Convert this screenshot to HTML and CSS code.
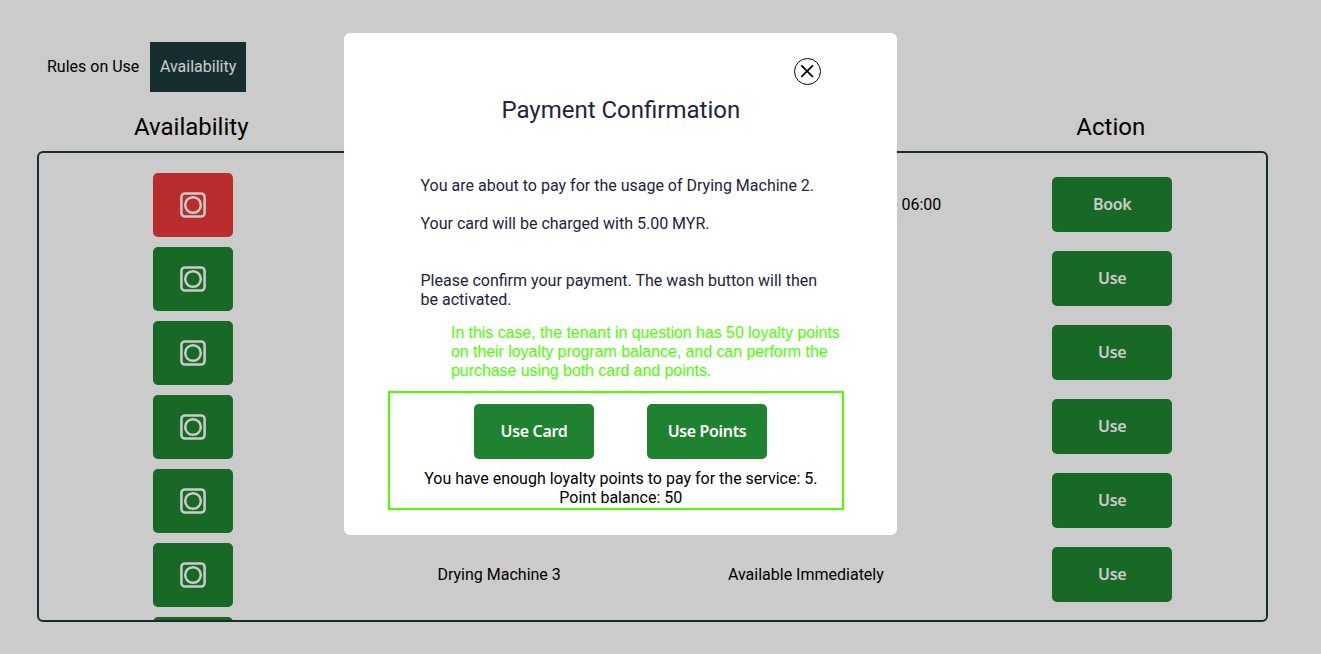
FILE: index.html
```html
<!DOCTYPE html>
<html lang="en">
<head>
<meta charset="utf-8">
<title>Payment Confirmation</title>
<link rel="stylesheet" href="styles.css">
</head>
<body>
<svg width="0" height="0" class="defs">
  <symbol id="machine" viewBox="0 0 26 26">
    <rect x="1.4" y="1.4" width="23.2" height="23.2" rx="3.6" fill="none" stroke="currentColor" stroke-width="2.5"/>
    <circle cx="13" cy="13" r="7.8" fill="none" stroke="currentColor" stroke-width="2.5"/>
  </symbol>
</svg>
<main class="page">
  <nav class="tabs">
    <a class="tab">Rules on Use</a>
    <a class="tab active">Availability</a>
  </nav>
  <div class="heads">
    <h2>Availability</h2><h2></h2><h2></h2><h2>Action</h2>
  </div>
  <section class="list">
    <div class="row"><div class="status busy"><svg><use href="#machine"/></svg></div><span></span><span class="slot">- 06:00</span><button class="btn">Book</button></div>
    <div class="row"><div class="status"><svg><use href="#machine"/></svg></div><span></span><span></span><button class="btn">Use</button></div>
    <div class="row"><div class="status"><svg><use href="#machine"/></svg></div><span></span><span></span><button class="btn">Use</button></div>
    <div class="row"><div class="status"><svg><use href="#machine"/></svg></div><span></span><span></span><button class="btn">Use</button></div>
    <div class="row"><div class="status"><svg><use href="#machine"/></svg></div><span></span><span></span><button class="btn">Use</button></div>
    <div class="row"><div class="status"><svg><use href="#machine"/></svg></div><span>Drying Machine 3</span><span>Available Immediately</span><button class="btn">Use</button></div>
    <div class="row"><div class="status"></div></div>
  </section>
</main>
<div class="overlay">
  <div class="modal">
    <svg class="close" viewBox="0 0 27 27"><circle cx="13.5" cy="13.5" r="13" fill="none" stroke="#000"/><path d="M7.3 7.3l11.6 11.6M18.9 7.3L7.3 18.9" stroke="#000" stroke-width="1.7"/></svg>
    <h1>Payment Confirmation</h1>
    <div class="copy">
      <p>You are about to pay for the usage of Drying Machine 2.</p>
      <p>Your card will be charged with 5.00 MYR.</p>
      <p class="confirm">Please confirm your payment. The wash button will then be activated.</p>
    </div>
    <div class="actions"><button class="btn">Use Card</button><button class="btn">Use Points</button></div>
    <p class="balance">You have enough loyalty points to pay for the service: 5.<br>Point balance: 50</p>
    <p class="note">In this case, the tenant in question has 50 loyalty points<br>on their loyalty program balance, and can perform the<br>purchase using both card and points.</p>
    <div class="frame"></div>
  </div>
</div>
</body>
</html>
```
FILE: styles.css
```css
* { box-sizing: border-box; }
body { margin: 0; height: 654px; overflow: hidden; background: #fefefe; color: #000; font: 16px/19px Roboto, sans-serif; }
h1, h2, p { margin: 0; font-weight: 400; }
.defs { position: absolute; }
.page { padding: 42px 53px 0 37px; }
.tabs { display: flex; height: 50px; }
.tab { padding: 0 10px; line-height: 49px; }
.tab.active { width: 96px; margin-left: .6px; background: #1c3a3b; color: #fefefe; }
.heads { display: grid; grid-template-columns: repeat(4, 1fr); padding: 0 4px 0 1px; height: 59px; }
.heads h2 { font-size: 24px; line-height: 28px; padding-top: 21px; text-align: center; }
.list { height: 471px; padding-top: 20px; border: 2px solid #1c3a3b; border-radius: 6px; overflow: hidden; }
.row { display: grid; grid-template-columns: repeat(4, 1fr); align-items: center; justify-items: center; height: 64px; margin-bottom: 10px; }
.row > span { padding-bottom: 2px; }
.row .slot { justify-self: end; padding-right: 18px; }
.status { display: flex; align-items: center; justify-content: center; width: 80px; height: 64px; margin-left: 1px; border-radius: 5px; background: #1e8230; color: #fefefe; }
.status.busy { background: #ea3838; }
.status svg { width: 26px; height: 26px; }
.btn { width: 120px; height: 55px; padding: 0 0 2px; border: 0; border-radius: 5px; background: #1e8230; color: #fefefe; font: 600 16px/20px "Noto Sans", sans-serif; letter-spacing: -.35px; }
.row .btn { margin: 0 1px 1px 0; }
.overlay { position: fixed; inset: 0; padding: 33px 0 0 344px; background: rgba(0, 0, 0, .2); }
.modal { position: relative; display: flex; flex-direction: column; width: 553px; height: 502px; padding: 25px 76px 0; border-radius: 6px; background: #fff; color: #23243b; }
.close { align-self: flex-end; width: 27px; height: 27px; }
.modal h1 { margin-top: 11px; padding-left: .6px; font-size: 24px; line-height: 28px; text-align: center; }
.copy { display: flex; flex-direction: column; gap: 19px; margin: 52px 0 0 .5px; }
.confirm { margin-top: 19px; }
.actions { display: flex; justify-content: center; gap: 53px; margin-top: 95px; }
.balance { margin: 10px -20px 0; padding-left: .6px; color: #000; text-align: center; }
.note { position: absolute; left: 107px; top: 290px; color: #4cff00; font-family: "Liberation Sans", Arial, sans-serif; letter-spacing: -.06px; white-space: nowrap; }
.frame { position: absolute; left: 44px; top: 358px; width: 456px; height: 119px; border: 2px solid #4cff00; }
```
